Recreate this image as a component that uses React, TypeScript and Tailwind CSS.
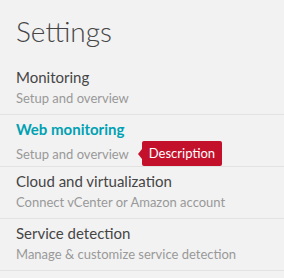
const items = [
  { title: "Monitoring", sub: "Setup and overview" },
  { title: "Web monitoring", sub: "Setup and overview", active: true },
  { title: "Cloud and virtualization", sub: "Connect vCenter or Amazon account" },
  { title: "Service detection", sub: "Manage & customize service detection" },
];

export default function App() {
  return (
    <div className="h-[278px] w-[284px] overflow-hidden bg-[#f2f2f2] font-['Lato',sans-serif]">
      <h1 className="px-4 pt-[13px] pb-[14px] text-[28px] leading-[36px] font-light text-[#454545]">
        Settings
      </h1>
      <ul>
        {items.map((item) => (
          <li
            key={item.title}
            className={
              item.active
                ? "border-b border-[#e2e2e2] px-4 pt-[4px]"
                : "border-b border-[#e2e2e2] px-4 pt-[4px] pb-[8px]"
            }
          >
            <p
              className={
                item.active
                  ? "text-[15px] leading-[20px] font-bold text-[#00a1b2]"
                  : "text-[15px] leading-[20px] text-[#454545]"
              }
            >
              {item.title}
            </p>
            {item.active ? (
              <div className="mt-[2px] flex h-[25px] items-center">
                <span className="text-[13px] leading-[16px] text-[#999999]">{item.sub}</span>
                <span className="relative ml-[13px] rounded-[2px] bg-[#c4112b] px-[7px] py-[4px] text-[13px] leading-[17px] text-white">
                  <span className="absolute top-1/2 left-[-4px] -translate-y-1/2 border-y-[5px] border-r-[4px] border-y-transparent border-r-[#c4112b]" />
                  Description
                </span>
              </div>
            ) : (
              <p className="mt-[3px] text-[13px] leading-[16px] text-[#999999]">{item.sub}</p>
            )}
          </li>
        ))}
      </ul>
    </div>
  );
}
